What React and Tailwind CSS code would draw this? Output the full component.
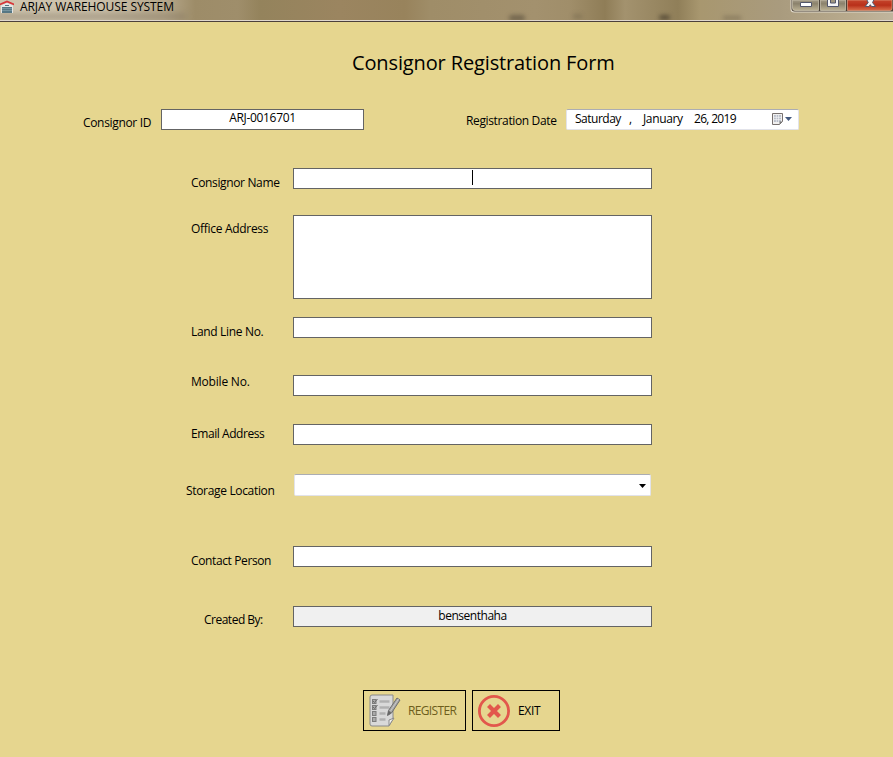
import React from "react";

const INPUT = "box-border border border-[#646464] bg-white text-center text-[12px] leading-[18px] shrink-0";

function Field({ label, labelClass, rowClass, children }) {
  return (
    <div className={"flex items-start " + rowClass}>
      <label className={"shrink-0 whitespace-nowrap leading-[18px] " + labelClass}>{label}</label>
      {children}
    </div>
  );
}

function WarehouseIcon() {
  return (
    <svg className="block h-[14px] w-[14px] shrink-0" viewBox="0 0 14 14">
      <path d="M1 5.5 7 2.5l6 3V13H1z" fill="#e4e6e6" />
      <path d="M0 5.2V3.4L7 .5l7 2.9v1.8L7 2.6z" fill="#d8353a" />
      <path d="M2 7h10v6H2z" fill="#567784" />
      <path d="M2 8.5h10M2 10.5h10" stroke="#82a0aa" strokeWidth=".7" />
      <path d="M5 5h4v1H5z" fill="#547480" />
    </svg>
  );
}

function CaptionButtons() {
  return (
    <svg className="block h-[14px] w-[103px] shrink-0" viewBox="0 0 103 14">
      <defs>
        <linearGradient id="cap" x2="0" y2="1">
          <stop offset="0" stopColor="#a29a85" />
          <stop offset=".35" stopColor="#8b826c" />
          <stop offset="1" stopColor="#bcb294" />
        </linearGradient>
        <linearGradient id="close" x2="0" y2="1">
          <stop offset="0" stopColor="#c5452c" />
          <stop offset=".5" stopColor="#b9301a" />
          <stop offset="1" stopColor="#d9704c" />
        </linearGradient>
      </defs>
      <path d="M.5 0v9q0 3.500 3.500 3.500h99V0z" fill="#e0d9cb" />
      <path d="M1.500 0v8.500q0 3 3 3H103V0z" fill="#4b4238" />
      <path d="M2.500 0v8q0 2.500 2.500 2.500h23.500V0z" fill="url(#cap)" stroke="#d0c8b5" strokeWidth=".7" />
      <path d="M30.500 0h25v10.500h-25z" fill="url(#cap)" stroke="#d0c8b5" strokeWidth=".7" />
      <path d="M57.500 0H102v8q0 2.500-2 2.500H57.500z" fill="url(#close)" stroke="#e39d80" strokeWidth=".7" />
      <path d="M10.500 2.500h11v4h-11z" fill="#fff" stroke="#53566a" />
      <path d="M37.500-2h11v8.500h-11z" fill="#f5f5f5" stroke="#53566a" />
      <path d="M40.500-1h5v4h-5z" fill="#a0967e" stroke="#53566a" />
      <path d="M76-2h3.500l1 1.500 1-1.500H85l-2.500 4.500 3 4H81.500l-1.200-1.800L79 6.500h-3.800l3-4z" fill="#f6f6f6" stroke="#53566a" />
    </svg>
  );
}

function TitleBar() {
  return (
    <header className="relative flex h-[22px] shrink-0 items-start overflow-hidden border-b border-[#4c403c] bg-[linear-gradient(90deg,#d0c6b0_0px,#cbc0aa_100px,#b5a78b_165px,#9d8c68_195px,#9f8e6b_238px,#94835c_260px,#9b8560_340px,#98835c_405px,#9f8d68_430px,#a3916e_535px,#a08e6a_570px,#8f7d57_605px,#a3926e_625px,#907f59_678px,#a8976f_700px,#a99b7e_780px,#b8aa8d_850px,#c0b59d_893px)]">
      <div className="absolute -left-1 top-[14px] h-[5px] w-[190px] bg-[#82755f]/60 blur-[3px]" />
      <div className="absolute left-[509px] top-[15px] h-[6px] w-[16px] rounded-full bg-[#554b3a]/60 blur-[2px]" />
      <div className="absolute left-[573px] top-[14px] h-[5px] w-[9px] bg-[#5e5240]/30 blur-[2px]" />
      <div className="absolute left-[659px] top-[15px] h-[5px] w-[11px] rounded-full bg-[#453b2c]/70 blur-[2px]" />
      <div className="absolute left-[723px] top-[16px] h-[4px] w-[18px] bg-[#5e5240]/40 blur-[2px]" />
      <div className="absolute inset-x-0 bottom-0 h-px bg-[#dfd7ce]" />
      <div className="relative flex w-full items-start">
        <WarehouseIcon />
        <span className="ml-[6px] grow whitespace-nowrap text-[12px] leading-[14px] tracking-[-0.08px]">ARJAY WAREHOUSE SYSTEM</span>
        <CaptionButtons />
      </div>
    </header>
  );
}

function CalendarIcon() {
  return (
    <svg className="block h-[12px] w-[20px]" viewBox="0 0 20 12">
      <path d="M.5.500h10v8l-3 3H.5z" fill="#f1f0ef" stroke="#77706f" />
      <path d="M2 2h7v7H2z" fill="#b9bec9" />
      <path d="M2 4.300h7M2 6.600h7M4.300 2v7M6.600 2v7" stroke="#f3f4f6" strokeWidth=".7" />
      <path d="M10.500 8.500h-3v3z" fill="#777" />
      <path d="M13 4h7l-3.500 4z" fill="#44597f" />
    </svg>
  );
}

function RegisterIcon() {
  return (
    <svg className="block h-[33px] w-[32px] shrink-0" viewBox="0 0 32 33">
      <path d="M3 1h21v24l-4 7H3q-2 0-2-2V3q0-2 2-2z" fill="#d9d9d9" stroke="#8a8a8a" />
      <path d="M25 24l-5 7.500V26z" fill="#f0f0f0" stroke="#8a8a8a" />
      {[6, 12, 18, 24].map((y) => (
        <g key={y}>
          <rect x="3.500" y={y - 0.5} width="3.500" height="4" fill="#aaa" stroke="#7c7c7c" />
          <path d={"M10.500 " + (y + 1.5) + "h" + (y < 15 ? 10 : 6)} stroke="#b0b0b0" strokeWidth="2.500" />
        </g>
      ))}
      <path d="M4 7l1.500 1.500 3-3.500M4 13l1.500 1.500 3-3.500" fill="none" stroke="#6b6b6b" />
      <path d="M18.500 21.500l1-5L28 4l3 2-8.500 13z" fill="#a6a6a6" stroke="#6f6f6f" />
      <path d="M18.500 21.500l1-5 3 2.500z" fill="#666" />
      <path d="M21.500 17l8-12" stroke="#c8c8c8" />
    </svg>
  );
}

function ExitIcon() {
  return (
    <svg className="block h-[32px] w-[32px] shrink-0" viewBox="0 0 32 32">
      <circle cx="16" cy="16" r="14.600" fill="none" stroke="#e2574c" strokeWidth="2.800" />
      <path d="M12 12l8 8M20 12l-8 8" stroke="#e2574c" strokeWidth="4.200" strokeLinecap="square" />
    </svg>
  );
}

export default function App() {
  return (
    <div className="flex h-[757px] w-[893px] flex-col overflow-hidden bg-[#e6d68f] font-['Open_Sans','Noto_Sans',sans-serif] text-[12px] text-black">
      <TitleBar />
      <main className="flex flex-col">
        <h1 className="ml-[352px] mt-[27px] whitespace-nowrap text-[20px] leading-7 tracking-[-0.13px]">Consignor Registration Form</h1>

        <div className="mt-[32px] flex h-[21px] items-start">
          <label className="ml-[83px] mt-[5px] w-[78px] shrink-0 whitespace-nowrap leading-[18px] tracking-[-0.33px]">Consignor ID</label>
          <div className={INPUT + " h-[21px] w-[203px] !leading-4 tracking-[-0.33px]"}>ARJ-0016701</div>
          <label className="ml-[102px] mt-[3px] w-[100px] shrink-0 whitespace-nowrap leading-[18px] tracking-[-0.36px]">Registration Date</label>
          <div className="flex h-[21px] w-[233px] items-start rounded-[2px] border border-[#e2e3ea] border-t-[#abadb3] bg-white pl-[8px]">
            <span className="w-[54px] leading-[18px] tracking-[-0.5px]">Saturday</span>
            <span className="w-[14px] leading-[18px]">,</span>
            <span className="w-[51px] leading-[18px] tracking-[-0.35px]">January</span>
            <span className="w-[78px] whitespace-nowrap leading-[18px] tracking-[-0.7px]">26, 2019</span>
            <span className="mt-[3px]"><CalendarIcon /></span>
          </div>
        </div>

        <Field label="Consignor Name" rowClass="mt-[38px] h-[21px] pl-[191px]" labelClass="mt-[6px] w-[102px] tracking-[-0.36px]">
          <div className={INPUT + " flex h-[21px] w-[359px] justify-center pt-px"}>
            <span className="h-[15px] w-px bg-black" />
          </div>
        </Field>
        <Field label="Office Address" rowClass="mt-[26px] h-[84px] pl-[191px]" labelClass="mt-[5px] w-[102px] tracking-[-0.3px]">
          <div className={INPUT + " h-[84px] w-[359px]"} />
        </Field>
        <Field label="Land Line No." rowClass="mt-[18px] h-[21px] pl-[191px]" labelClass="mt-[6px] w-[102px] tracking-[-0.33px]">
          <div className={INPUT + " h-[21px] w-[359px]"} />
        </Field>
        <Field label="Mobile No." rowClass="mt-[37px] h-[21px] pl-[191px]" labelClass="mt-[-2px] w-[102px] tracking-[-0.2px]">
          <div className={INPUT + " h-[21px] w-[359px]"} />
        </Field>
        <Field label="Email Address" rowClass="mt-[28px] h-[21px] pl-[191px]" labelClass="mt-px w-[102px] tracking-[-0.43px]">
          <div className={INPUT + " h-[21px] w-[359px]"} />
        </Field>
        <Field label="Storage Location" rowClass="mt-[29px] h-[22px] pl-[186px]" labelClass="mt-[8px] w-[108px] tracking-[-0.33px]">
          <div className="flex h-[22px] w-[357px] items-center justify-end rounded-[2px] border border-[#e2e3ea] border-t-[#abadb3] bg-white pr-[4px]">
            <svg className="mt-[2px] block h-[4px] w-[7px]" viewBox="0 0 7 4"><path d="M0 0h7L3.500 4z" /></svg>
          </div>
        </Field>
        <Field label="Contact Person" rowClass="mt-[50px] h-[21px] pl-[191px]" labelClass="mt-[6px] w-[102px] tracking-[-0.38px]">
          <div className={INPUT + " h-[21px] w-[359px]"} />
        </Field>
        <Field label="Created By:" rowClass="mt-[39px] h-[21px] pl-[204px]" labelClass="mt-[5px] w-[89px] tracking-[-0.5px]">
          <div className={INPUT + " h-[21px] w-[359px] !bg-[#f0f0f0] tracking-[-0.47px]"}>bensenthaha</div>
        </Field>

        <div className="mt-[63px] flex gap-[6px] pl-[363px]">
          <button className="flex h-[41px] w-[103px] items-center border border-black pl-[5px]">
            <RegisterIcon />
            <span className="ml-[7px] tracking-[-0.65px] text-[#6d5e1c]">REGISTER</span>
          </button>
          <button className="flex h-[41px] w-[88px] items-center border border-black pl-[5px]">
            <ExitIcon />
            <span className="ml-[8px] tracking-[-0.3px]">EXIT</span>
          </button>
        </div>
      </main>
    </div>
  );
}
